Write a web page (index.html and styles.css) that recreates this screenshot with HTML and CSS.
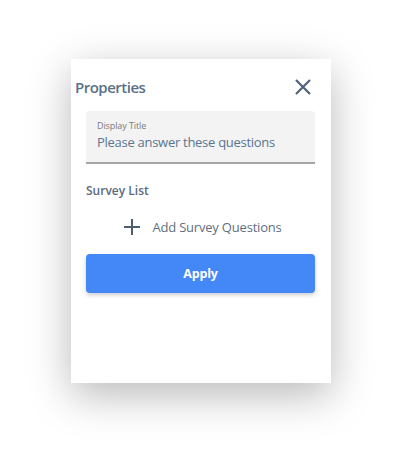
FILE: index.html
```html
<!DOCTYPE html>
<html>
<head>
<meta charset="utf-8">
<link rel="stylesheet" href="styles.css">
</head>
<body>
<div class="panel">
  <div class="header">
    <span class="title">Properties</span>
    <svg class="close" width="18" height="18" viewBox="0 0 18 18"><path d="M2 2 L16 16 M16 2 L2 16" stroke="#4d6379" stroke-width="2.2" stroke-linecap="butt" fill="none"/></svg>
  </div>
  <div class="field">
    <div class="label">Display Title</div>
    <div class="value">Please answer these questions</div>
  </div>
  <div class="section">Survey List</div>
  <div class="add">
    <svg width="18" height="18" viewBox="0 0 18 18"><path d="M9 1 V17 M1 9 H17" stroke="#4d5d6f" stroke-width="2" fill="none"/></svg>
    <span>Add Survey Questions</span>
  </div>
  <button class="apply">Apply</button>
</div>
</body>
</html>
```
FILE: styles.css
```css
html, body { margin: 0; padding: 0; background: #fff; }
body { font-family: "Open Sans", "Liberation Sans", sans-serif; min-height: 470px; padding-top: 59px; box-sizing: border-box; }
.panel {
  margin: 0 0 0 71px;
  width: 260px;
  height: 324px;
  background: #fff;
  box-shadow: 0 12px 40px rgba(0,0,0,0.28);
  display: flex;
  flex-direction: column;
  box-sizing: border-box;
}
.header {
  display: flex;
  justify-content: space-between;
  align-items: center;
  padding: 17px 19px 0 4px;
  height: 38px;
  box-sizing: border-box;
}
.title { font-size: 15px; font-weight: 600; color: #5b7088; letter-spacing: -0.5px; }
.field {
  margin: 14px 16px 0 15px;
  background: #f3f3f3;
  border-radius: 4px 4px 0 0;
  border-bottom: 2px solid #a5a5a5;
  padding: 9px 11px 11px;
}
.label { font-size: 9px; line-height: 12px; color: #7a7a7a; letter-spacing: -0.1px; }
.value { font-size: 13px; line-height: 18px; color: #5a7591; margin-top: 1px; letter-spacing: -0.28px; }
.section { margin: 19px 0 0 15px; font-size: 12px; font-weight: 600; color: #5b6b7c; line-height: 16px; }
.add {
  display: flex; align-items: center; justify-content: center; gap: 11px;
  margin-top: 18px; height: 20px; padding-left: 3px;
  font-size: 13px; color: #5f6f80; letter-spacing: -0.2px;
}
.apply {
  margin: 17px 16px 0 15px;
  height: 39px;
  border: none;
  border-radius: 4px;
  background: #4488f8;
  color: #fff;
  font-family: inherit;
  font-size: 12.5px;
  font-weight: 700;
  letter-spacing: -0.2px;
  box-shadow: 0 2px 4px rgba(0,0,0,0.2);
}
```
